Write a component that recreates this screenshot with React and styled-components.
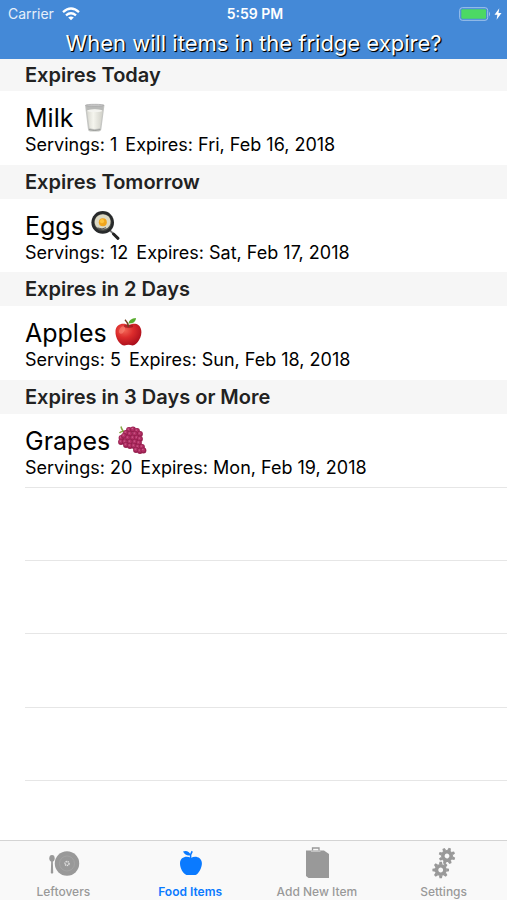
import React from "react";
import styled, { createGlobalStyle, css } from "styled-components";

const GlobalStyle = createGlobalStyle`
  *, *::before, *::after { box-sizing: border-box; }
  body {
    margin: 0;
    background: #fff;
    color: #000;
    font-family: Inter, "Liberation Sans", sans-serif;
  }
`;

const Screen = styled.div`
  display: flex;
  flex-direction: column;
  height: 100vh;
`;

const TopBar = styled.header`
  flex: none;
  height: 59px;
  background: #4489d7;
  color: #fff;
`;

const StatusBar = styled.div`
  display: grid;
  grid-template-columns: 1fr auto 1fr;
  align-items: center;
  height: 27px;
  padding: 0 5px 0 8px;
  font-size: 14px;
  line-height: 20px;
`;

const Carrier = styled.div`
  display: flex;
  align-items: center;
  gap: 8px;
  color: #e6effa;
`;

const Clock = styled.time`
  font-weight: 600;
`;

const Power = styled.div`
  display: flex;
  align-items: center;
  justify-content: flex-end;
  gap: 3px;
`;

const Title = styled.h1`
  margin: 0;
  font-size: 22px;
  font-weight: 400;
  line-height: 32px;
  text-align: center;
  text-shadow: 1px 1px 1px #000, 1px 1px 0 #111;
  white-space: nowrap;
`;

const List = styled.main`
  flex: 1;
  min-height: 0;
  overflow: hidden;
`;

const SectionTitle = styled.h2`
  margin: 0;
  padding-left: 25px;
  background: #f6f6f6;
  color: #222;
  font-size: 20px;
  font-weight: 600;
  line-height: ${(p) => (p.$first ? 32 : 34)}px;
`;

const Section = styled.section`
  &:nth-child(odd) > div { min-height: 74px; }
`;

const FoodRow = styled.div`
  min-height: 73px;
  padding: 11px 0 0 25px;
`;

const FoodName = styled.h3`
  display: flex;
  align-items: center;
  gap: 6px;
  margin: 0;
  font-size: 25px;
  font-weight: 400;
  line-height: 32px;
`;

const Detail = styled.p`
  display: flex;
  gap: 8px;
  margin: 0;
  font-size: 18px;
  line-height: 22px;
`;

const EmptyRows = styled.div`
  margin-left: 25px;
`;

const EmptyRow = styled.div`
  height: 73px;
  border-top: 1px solid #e6e6e6;
  &:nth-child(3) { height: 74px; }
`;

const TabBar = styled.nav`
  flex: none;
  display: grid;
  grid-template-columns: repeat(4, 1fr);
  height: 60px;
  background: #f9f9f9;
  border-top: 1px solid #d4d4d4;
`;

const Tab = styled.button`
  display: flex;
  flex-direction: column;
  align-items: center;
  gap: 4px;
  padding: 4px 0 0;
  border: 0;
  background: none;
  color: #999;
  font-family: inherit;
  font-size: 12px;
  font-weight: 500;
  line-height: 14px;
  white-space: nowrap;
  cursor: pointer;
  ${(p) => p.$active && css`
    color: #0a7aff;
    font-weight: 600;
  `}
`;

const Icon = styled.svg`
  display: block;
  flex: none;
`;

const WifiIcon = () => (
  <Icon width="18" height="14" viewBox="0 0 18 14" fill="none" stroke="#fff" strokeWidth="2.3" aria-hidden="true">
    <path d="M1 5.1Q9 -2.2 17 5.1" />
    <path d="M4 8.4Q9 4.1 14 8.4" />
    <path d="M9 13.2L6.2 10.4Q9 8.4 11.8 10.4Z" fill="#fff" stroke="none" />
  </Icon>
);

const BatteryIcon = () => (
  <Icon width="32" height="14" viewBox="0 0 32 14" aria-label="Battery full">
    <rect x="0.7" y="0.7" width="28" height="12.6" rx="2.6" fill="none" stroke="#a3c5ec" />
    <rect x="2.3" y="2.3" width="24.8" height="9.4" rx="1" fill="#4cd964" />
    <path d="M30 4.5Q32 7 30 9.5Z" fill="#a3c5ec" />
  </Icon>
);

const BoltIcon = () => (
  <Icon width="8" height="12" viewBox="0 0 8 12" aria-hidden="true">
    <path d="M5.3 0.3L0.5 6.7H3.4L2.6 11.7L7.5 5.1H4.5Z" fill="#fff" />
  </Icon>
);

const MilkIcon = () => (
  <Icon width="32" height="32" viewBox="0 0 32 32" aria-label="Glass of milk">
    <defs>
      <linearGradient id="milk" x1="0" x2="1">
        <stop offset="0" stopColor="#d7d7cf" />
        <stop offset="0.4" stopColor="#f5f5ee" />
        <stop offset="1" stopColor="#d0d0c8" />
      </linearGradient>
    </defs>
    <path d="M6 3L9 27.5Q9 29 11 29.5H20Q22 29 22.3 27.5L25.5 3Z" fill="#c6c7c4" />
    <path d="M7 3.5H24.5L24 9H7.5Z" fill="#b9bab8" />
    <path d="M8 8.5Q15.5 6.7 23.7 8.5L21 26Q15.5 28 10.5 26Z" fill="url(#milk)" />
    <ellipse cx="15.8" cy="8.7" rx="7.6" ry="1.4" fill="#f3f3ef" />
    <path d="M10 27.5Q15.5 29.5 21.3 27.5" fill="none" stroke="#999b98" />
    <ellipse cx="15.8" cy="3.3" rx="9.2" ry="1" fill="#ccc" stroke="#a5a5a5" strokeWidth="0.7" />
  </Icon>
);

const EggIcon = () => (
  <Icon width="32" height="32" viewBox="0 0 32 32" aria-label="Egg in a frying pan">
    <path d="M19.5 20L24 24.4" stroke="#777" strokeWidth="1.8" />
    <path d="M23.5 24L28 28.3" stroke="#222" strokeWidth="3" strokeLinecap="round" />
    <circle cx="12.7" cy="12.4" r="11.3" fill="#282a2b" />
    <circle cx="12.7" cy="12.4" r="8.7" fill="#4c4e49" />
    <path d="M4.9 10Q7 4.3 13 4.2Q20 4.8 20.6 11Q20.8 17.5 15 19Q10.5 20.3 6.5 17Q4 14 4.9 10Z" fill="#dcd9c4" />
    <circle cx="12.8" cy="12.2" r="4" fill="#f0a51d" />
    <circle cx="12" cy="11.2" r="2.1" fill="#ffc43c" />
    <path d="M8 18Q12 20 16 17.7" stroke="#555" fill="none" />
  </Icon>
);

const RedAppleIcon = () => (
  <Icon width="32" height="32" viewBox="0 0 32 32" aria-label="Red apple">
    <defs>
      <radialGradient id="red-apple" cx="0.35" cy="0.3" r="0.75">
        <stop offset="0" stopColor="#f36555" />
        <stop offset="0.45" stopColor="#dc2c2c" />
        <stop offset="1" stopColor="#a90d1b" />
      </radialGradient>
    </defs>
    <path d="M15.5 8.5C12 5.5 3 5.8 2.5 14C2 21 7 28.5 11.5 28.5Q15.5 27 19.5 28.5C24.5 28 29.5 19 28.2 13C27 6 20 5.5 15.5 8.5Z" fill="url(#red-apple)" />
    <ellipse cx="15.5" cy="9.3" rx="4.7" ry="1.7" fill="#8e1019" opacity="0.6" />
    <path d="M15.6 10Q15 5.5 12 2.8" fill="none" stroke="#71411f" strokeWidth="1.5" />
    <path d="M15.5 6.5Q16 1.5 23 1Q23 6.5 15.5 6.5Z" fill="#58ac2e" />
    <ellipse cx="9" cy="13" rx="2.5" ry="4" fill="#fa8575" opacity="0.6" transform="rotate(30 9 13)" />
  </Icon>
);

const grapes = [
  [13, 5], [17, 4.5], [21, 6], [10, 8], [24, 9], [14, 9], [19, 9],
  [5.5, 13], [8, 11], [12, 13], [17, 13], [21, 13], [24, 14],
  [5, 17], [9, 17], [14, 17], [19, 17], [23, 18], [10, 20],
  [14, 21], [18, 21], [22, 22], [26, 22], [20, 25], [24, 26], [27.5, 25.5],
];

const GrapesIcon = () => (
  <Icon width="32" height="32" viewBox="0 0 32 32" aria-label="Bunch of grapes">
    <path d="M11 8Q6 7 5 1.5M3.5 8Q6 5 11 8" fill="none" stroke="#87a746" strokeWidth="1.5" />
    {grapes.map(([x, y]) => (
      <g key={`${x}-${y}`}>
        <circle cx={x} cy={y} r="2.9" fill="#96204f" />
        <circle cx={x - 0.3} cy={y - 0.4} r="2" fill="#b32f65" />
        <circle cx={x - 0.7} cy={y - 0.9} r="0.7" fill="#cf6e95" />
      </g>
    ))}
  </Icon>
);

const PlateIcon = () => (
  <Icon width="36" height="36" viewBox="0 0 36 36" fill="currentColor" aria-hidden="true">
    <circle cx="22" cy="18.5" r="12.2" />
    <circle cx="22" cy="18.5" r="7.5" fill="none" stroke="#a9a9a9" strokeWidth="0.6" />
    <circle cx="22" cy="18.5" r="2" fill="none" stroke="#e2e2e2" strokeWidth="1.5" strokeDasharray="1.2 0.6" />
    <ellipse cx="7" cy="13.3" rx="2.7" ry="3.4" />
    <path d="M6.2 15H7.8L8.2 28Q7 29 5.8 28Z" />
  </Icon>
);

const AppleIcon = () => (
  <Icon width="36" height="36" viewBox="0 0 36 36" fill="currentColor" aria-hidden="true">
    <path d="M19 13C23 10.5 29.5 12 29.9 18C30 23 26.5 29 23.5 30H14.5C11 28.5 8 23 8 18.5C8 12 14.5 10.5 19 13Z" />
    <path d="M18.6 13Q18.2 9 20.2 6.3" fill="none" stroke="currentColor" strokeWidth="1.6" />
    <path d="M11 6.5Q16.5 4.8 18.7 10.3Q13.5 11.3 11 6.5Z" />
  </Icon>
);

const ClipboardIcon = () => (
  <Icon width="36" height="36" viewBox="0 0 36 36" fill="currentColor" aria-hidden="true">
    <path d="M7 5.5H25L30 9V33H9.5L7 31Z" />
    <path d="M13.5 5.5V3H20V5.5" fill="none" stroke="currentColor" strokeWidth="1.3" />
    <path d="M12 6.4H21.5" stroke="#d2d2d2" strokeWidth="0.8" />
  </Icon>
);

const teeth = [0, 45, 90, 135, 180, 225, 270, 315];

const Gear = ({ x, y, turn }) => (
  <g transform={`translate(${x} ${y}) rotate(${turn})`}>
    <circle r="4.2" fill="none" stroke="currentColor" strokeWidth="3.6" />
    {teeth.map((angle) => (
      <path key={angle} d="M-1.8 -5.5L-1.2 -8.3H1.2L1.8 -5.5Z" transform={`rotate(${angle})`} />
    ))}
  </g>
);

const GearsIcon = () => (
  <Icon width="36" height="36" viewBox="0 0 36 36" fill="currentColor" aria-hidden="true">
    <Gear x={21} y={11} turn={20} />
    <Gear x={14.7} y={25} turn={0} />
  </Icon>
);

const foods = [
  { due: "Expires Today", name: "Milk", icon: MilkIcon, servings: 1, date: "Fri, Feb 16, 2018" },
  { due: "Expires Tomorrow", name: "Eggs", icon: EggIcon, servings: 12, date: "Sat, Feb 17, 2018" },
  { due: "Expires in 2 Days", name: "Apples", icon: RedAppleIcon, servings: 5, date: "Sun, Feb 18, 2018" },
  { due: "Expires in 3 Days or More", name: "Grapes", icon: GrapesIcon, servings: 20, date: "Mon, Feb 19, 2018" },
];

const tabs = [
  { label: "Leftovers", icon: PlateIcon },
  { label: "Food Items", icon: AppleIcon, active: true },
  { label: "Add New Item", icon: ClipboardIcon },
  { label: "Settings", icon: GearsIcon },
];

export default function App() {
  return (
    <Screen>
      <GlobalStyle />
      <TopBar>
        <StatusBar>
          <Carrier>Carrier <WifiIcon /></Carrier>
          <Clock>5:59 PM</Clock>
          <Power><BatteryIcon /><BoltIcon /></Power>
        </StatusBar>
        <Title>When will items in the fridge expire?</Title>
      </TopBar>
      <List>
        {foods.map(({ due, name, icon: FoodIcon, servings, date }, i) => (
          <Section key={name}>
            <SectionTitle $first={i === 0}>{due}</SectionTitle>
            <FoodRow>
              <FoodName>{name} <FoodIcon /></FoodName>
              <Detail>
                <span>Servings: {servings}</span>
                <span>Expires: {date}</span>
              </Detail>
            </FoodRow>
          </Section>
        ))}
        <EmptyRows>
          {[0, 1, 2, 3, 4].map((n) => <EmptyRow key={n} />)}
        </EmptyRows>
      </List>
      <TabBar>
        {tabs.map(({ label, icon: TabIcon, active }) => (
          <Tab key={label} type="button" $active={active} aria-current={active ? "page" : undefined}>
            <TabIcon />
            {label}
          </Tab>
        ))}
      </TabBar>
    </Screen>
  );
}
